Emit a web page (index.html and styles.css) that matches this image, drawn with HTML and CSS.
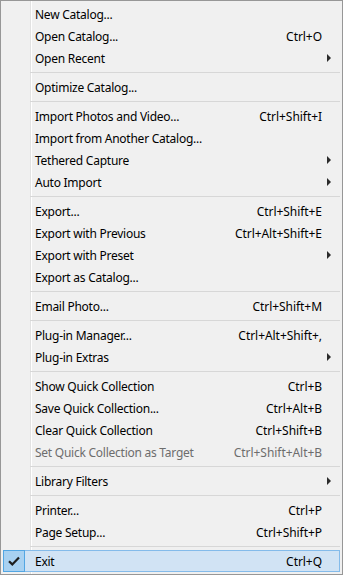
FILE: index.html
```html
<!DOCTYPE html>
<html>
<head>
<meta charset="utf-8">
<link rel="stylesheet" href="styles.css">
</head>
<body>
<div class="menu">
  <div class="item"><span class="icon"></span><span class="label">New Catalog...</span><span class="key"></span><span class="sub"></span></div>
  <div class="item"><span class="icon"></span><span class="label">Open Catalog...</span><span class="key">Ctrl+O</span><span class="sub"></span></div>
  <div class="item"><span class="icon"></span><span class="label">Open Recent</span><span class="key"></span><span class="sub"><i class="arrow"></i></span></div>
  <div class="sep"></div>
  <div class="item"><span class="icon"></span><span class="label">Optimize Catalog...</span><span class="key"></span><span class="sub"></span></div>
  <div class="sep"></div>
  <div class="item"><span class="icon"></span><span class="label">Import Photos and Video...</span><span class="key">Ctrl+Shift+I</span><span class="sub"></span></div>
  <div class="item"><span class="icon"></span><span class="label">Import from Another Catalog...</span><span class="key"></span><span class="sub"></span></div>
  <div class="item"><span class="icon"></span><span class="label">Tethered Capture</span><span class="key"></span><span class="sub"><i class="arrow"></i></span></div>
  <div class="item"><span class="icon"></span><span class="label">Auto Import</span><span class="key"></span><span class="sub"><i class="arrow"></i></span></div>
  <div class="sep"></div>
  <div class="item"><span class="icon"></span><span class="label">Export...</span><span class="key">Ctrl+Shift+E</span><span class="sub"></span></div>
  <div class="item"><span class="icon"></span><span class="label">Export with Previous</span><span class="key">Ctrl+Alt+Shift+E</span><span class="sub"></span></div>
  <div class="item"><span class="icon"></span><span class="label">Export with Preset</span><span class="key"></span><span class="sub"><i class="arrow"></i></span></div>
  <div class="item"><span class="icon"></span><span class="label">Export as Catalog...</span><span class="key"></span><span class="sub"></span></div>
  <div class="sep"></div>
  <div class="item"><span class="icon"></span><span class="label">Email Photo...</span><span class="key">Ctrl+Shift+M</span><span class="sub"></span></div>
  <div class="sep"></div>
  <div class="item"><span class="icon"></span><span class="label">Plug-in Manager...</span><span class="key">Ctrl+Alt+Shift+,</span><span class="sub"></span></div>
  <div class="item"><span class="icon"></span><span class="label">Plug-in Extras</span><span class="key"></span><span class="sub"><i class="arrow"></i></span></div>
  <div class="sep"></div>
  <div class="item"><span class="icon"></span><span class="label">Show Quick Collection</span><span class="key">Ctrl+B</span><span class="sub"></span></div>
  <div class="item"><span class="icon"></span><span class="label">Save Quick Collection...</span><span class="key">Ctrl+Alt+B</span><span class="sub"></span></div>
  <div class="item"><span class="icon"></span><span class="label">Clear Quick Collection</span><span class="key">Ctrl+Shift+B</span><span class="sub"></span></div>
  <div class="item disabled"><span class="icon"></span><span class="label">Set Quick Collection as Target</span><span class="key">Ctrl+Shift+Alt+B</span><span class="sub"></span></div>
  <div class="sep"></div>
  <div class="item"><span class="icon"></span><span class="label">Library Filters</span><span class="key"></span><span class="sub"><i class="arrow"></i></span></div>
  <div class="sep"></div>
  <div class="item"><span class="icon"></span><span class="label">Printer...</span><span class="key">Ctrl+P</span><span class="sub"></span></div>
  <div class="item"><span class="icon"></span><span class="label">Page Setup...</span><span class="key">Ctrl+Shift+P</span><span class="sub"></span></div>
  <div class="sep"></div>
  <div class="item active"><span class="icon"><span class="checkbox"><svg width="12" height="10" viewBox="0 0 12 10"><path d="M1 5.2 L4.3 8.4 L11 1.4" fill="none" stroke="#1e1e1e" stroke-width="2.2"/></svg></span></span><span class="label">Exit</span><span class="key">Ctrl+Q</span><span class="sub"></span></div>
</div>
</body>
</html>
```
FILE: styles.css
```css
html, body {
  margin: 0;
  padding: 0;
  background: #f0f0f0;
}
.menu {
  box-sizing: border-box;
  width: 343px;
  height: 575px;
  border: 1px solid #979797;
  padding: 2px;
  background-color: #f0f0f0;
  background-image: linear-gradient(to right, transparent 29px, #e2e2e2 29px, #e2e2e2 30px, #ffffff 30px, #ffffff 31px, transparent 31px);
  font-family: "Noto Sans", "Open Sans", sans-serif;
  font-size: 12px;
  color: #000;
  display: flex;
  flex-direction: column;
}
.item {
  box-sizing: border-box;
  height: 22px;
  display: flex;
  align-items: center;
  border: 1px solid transparent;
  white-space: nowrap;
}
.icon {
  width: 31px;
  flex: none;
  height: 20px;
  display: flex;
  align-items: center;
}
.label {
  flex: 1;
  letter-spacing: -0.25px;
}
.key {
  letter-spacing: -0.05px;
}
.sub {
  width: 17px;
  flex: none;
  display: flex;
  align-items: center;
  justify-content: flex-start;
  padding-left: 5px;
  box-sizing: border-box;
}
.arrow {
  display: block;
  width: 0;
  height: 0;
  border-top: 4px solid transparent;
  border-bottom: 4px solid transparent;
  border-left: 4px solid #2b2b2b;
}
.disabled {
  color: #6d6d6d;
}
.sep {
  height: 7px;
  margin-left: 27px;
  display: flex;
  flex-direction: column;
  justify-content: center;
}
.sep::before {
  content: "";
  display: block;
  height: 1px;
  background: #d7d7d7;
}
.active {
  background: #d1e3f4;
  border-color: #84bbea;
}
.checkbox {
  box-sizing: border-box;
  width: 22px;
  height: 22px;
  margin-left: -1px;
  background: #a8d1f1;
  border: 1px solid #52a6e3;
  display: flex;
  align-items: center;
  justify-content: center;
}
```
